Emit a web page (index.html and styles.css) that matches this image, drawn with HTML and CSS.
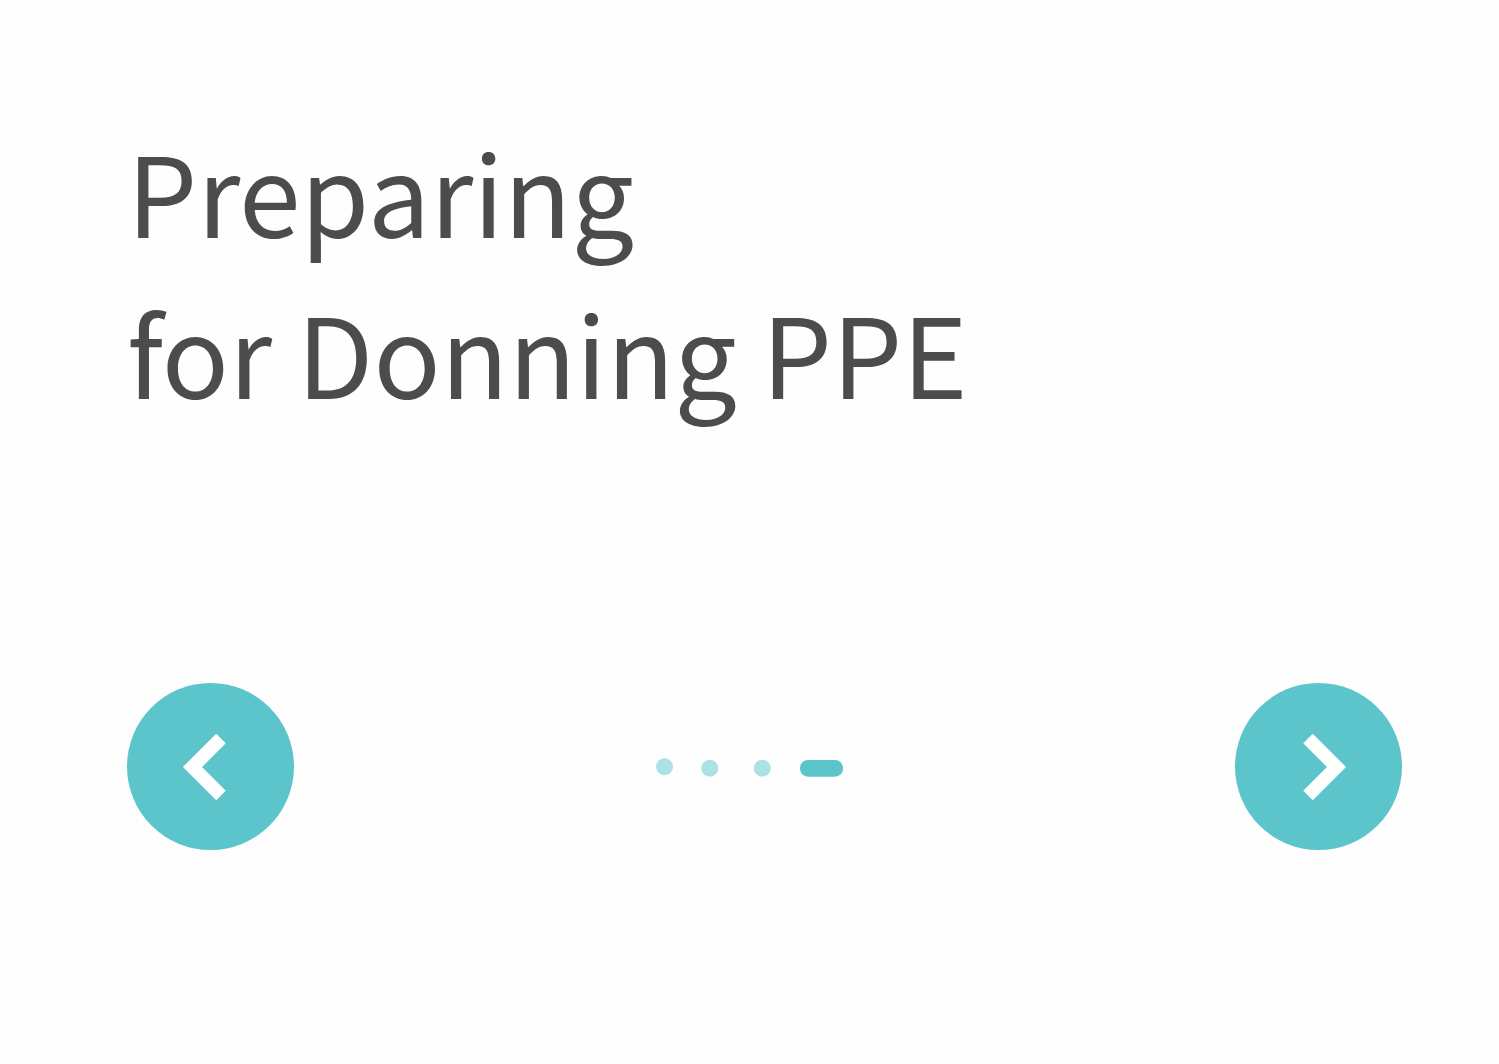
FILE: index.html
```
<!DOCTYPE html>
<html lang="en">
<head>
<meta charset="utf-8">
<title>Preparing for Donning PPE</title>
<link rel="stylesheet" href="styles.css">
</head>
<body>
<main class="slide">
  <h1 class="title">Preparing<br>for Donning PPE</h1>
  <nav class="pager" aria-label="Slides">
    <button class="arrow" type="button" aria-label="Previous">
      <svg class="icon" viewBox="0 0 167 167" aria-hidden="true"><path d="M94 55.500 65.500 84 94 112.500" fill="none" stroke="currentColor" stroke-width="13.500"/></svg>
    </button>
    <svg class="dots" viewBox="0 0 188 20" aria-hidden="true">
      <g class="dot"><circle cx="8.500" cy="9.700" r="8.500"/><circle cx="53.800" cy="11.300" r="8.500"/><circle cx="106.300" cy="11.300" r="8.500"/></g>
      <rect class="dot-current" x="144" y="3" width="43" height="16.700" rx="8"/>
    </svg>
    <button class="arrow" type="button" aria-label="Next">
      <svg class="icon" viewBox="0 0 167 167" aria-hidden="true"><path d="M73 55.500 101.500 84 73 112.500" fill="none" stroke="currentColor" stroke-width="13.500"/></svg>
    </button>
  </nav>
</main>
</body>
</html>
```
FILE: styles.css
```
* { box-sizing: border-box; }
body {
  margin: 0;
  background: #fefefe;
  color: #4c4c4c;
  font-family: "Noto Sans CJK SC", "Noto Sans", sans-serif;
}
.slide { padding: 109px 97px 213px 127px; }
.title {
  margin: 0;
  font-size: 111px;
  font-weight: 400;
  line-height: 161px;
}
.pager {
  display: flex;
  align-items: center;
  justify-content: space-between;
  margin-top: 252px;
}
.arrow {
  width: 167px;
  height: 167px;
  padding: 0;
  border: 0;
  border-radius: 50%;
  background: #5bc5cb;
  color: #fff;
}
.icon { display: block; width: 100%; }
.dots { width: 188px; height: 20px; margin-right: 30px; }
.dot { fill: #ace2e5; }
.dot-current { fill: #5bc5cb; }
```
